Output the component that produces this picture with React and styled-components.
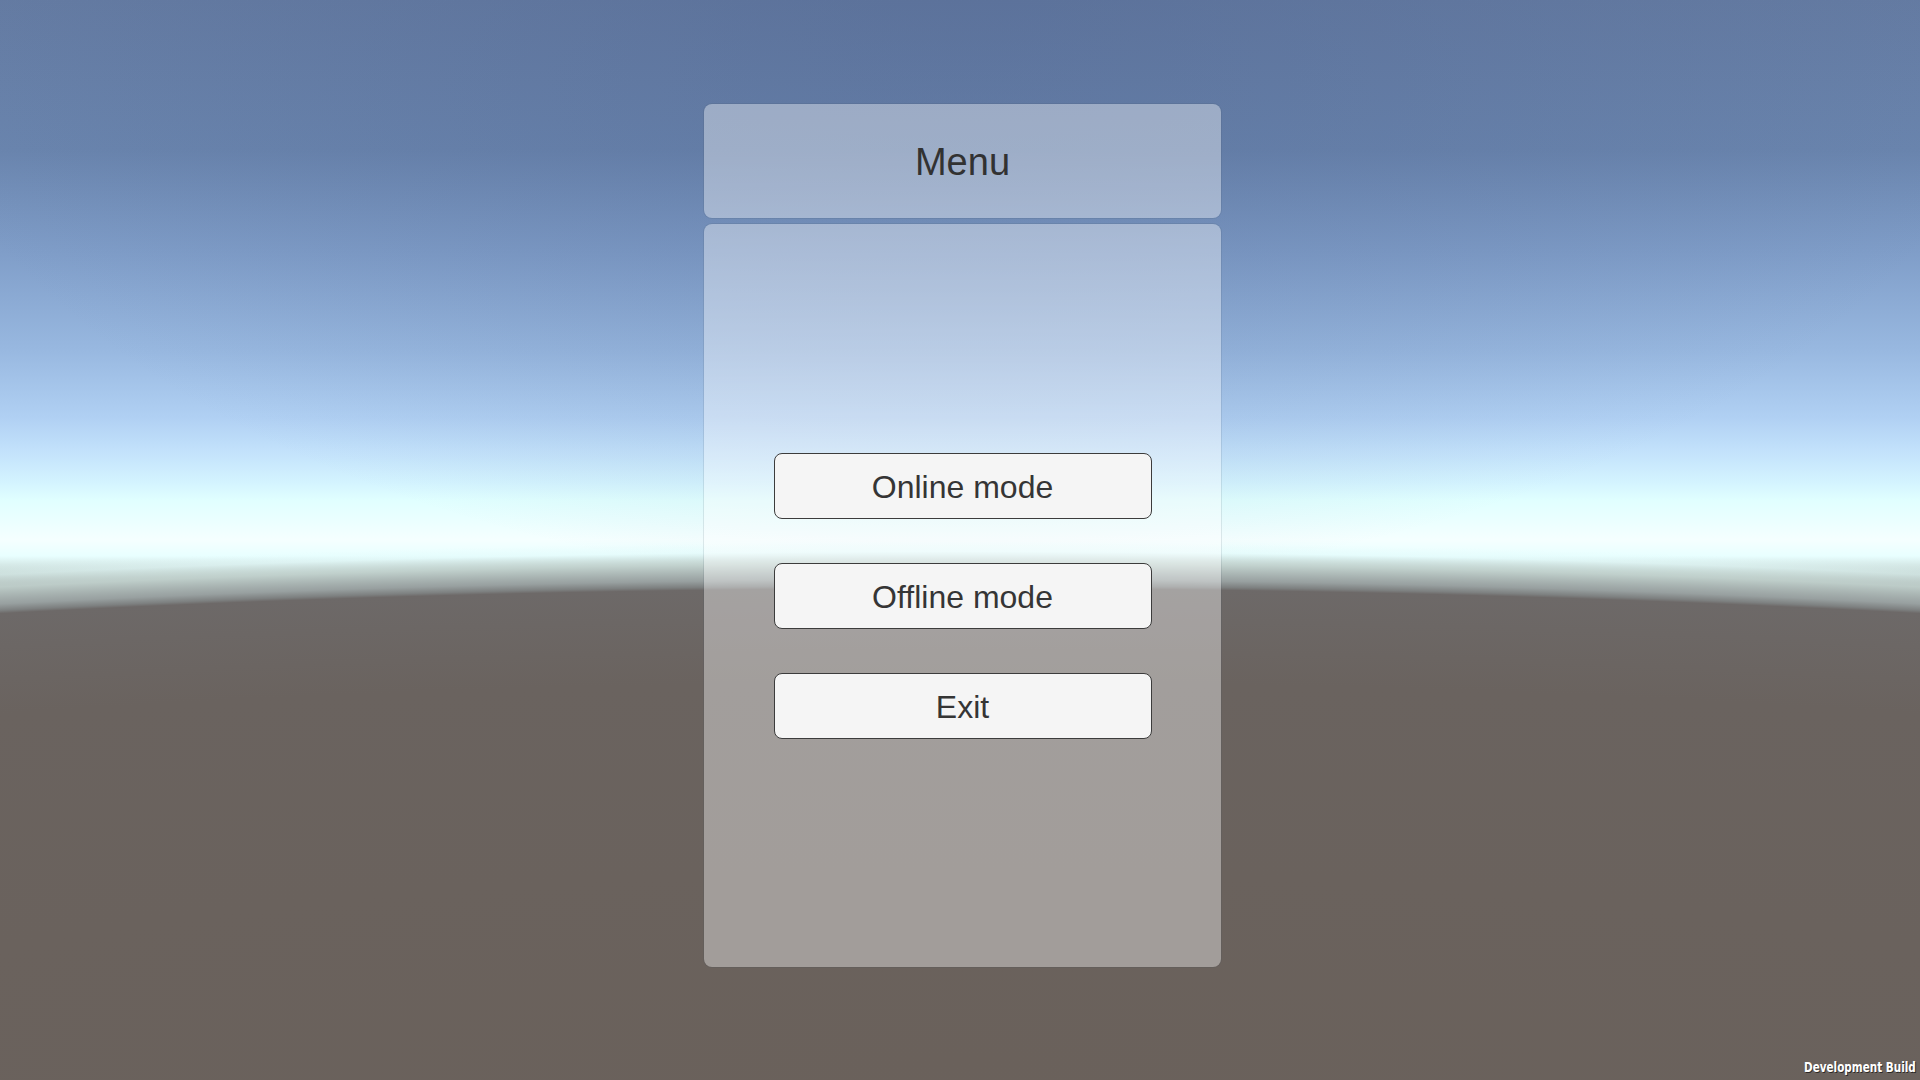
import React from "react";
import styled, { createGlobalStyle } from "styled-components";

const GlobalStyle = createGlobalStyle`
  html, body { margin: 0; padding: 0; height: 100%; overflow: hidden; }
  body { font-family: "Liberation Sans", Arial, sans-serif; }
`;

const Scene = styled.div`
  position: relative;
  width: 100vw;
  height: 100vh;
  box-sizing: border-box;
  padding-top: 104px;
  display: flex;
  justify-content: center;
  align-items: flex-start;
  background:
    radial-gradient(3000px 475px at 50% 1062px,
      #6a615b 0%,
      #6a635f 80%,
      #6d6968 99.7%,
      rgba(125,128,128,1) 100.3%,
      rgba(152,160,160,1) 101.6%,
      rgba(192,208,204,0.9) 105%,
      rgba(225,248,248,0.4) 107.5%,
      rgba(232,255,255,0) 109.5%),
    radial-gradient(ellipse 1100px 650px at 50% -60px, rgba(70,90,135,0.32), rgba(70,90,135,0) 100%),
    linear-gradient(to bottom,
      #657ca3 0px,
      #6a85ae 150px,
      #7f9dc8 250px,
      #98b8e0 350px,
      #b0d0f3 417px,
      #c2e1fb 450px,
      #d4f4ff 483px,
      #e0ffff 500px,
      #f5ffff 540px,
      #e8ffff 556px,
      #c0d0cc 575px,
      #6c6867 600px);
`;

const Column = styled.div`
  width: 517px;
  margin-left: 5px;
  display: flex;
  flex-direction: column;
  gap: 6px;
`;

const Panel = styled.div`
  background: rgba(255, 255, 255, 0.38);
  border-radius: 8px;
  box-shadow: 0 0 0 1px rgba(60, 70, 90, 0.12);
`;

const Header = styled(Panel)`
  height: 114px;
  box-sizing: border-box;
  padding-top: 2px;
  display: flex;
  align-items: center;
  justify-content: center;
`;

const Title = styled.h1`
  margin: 0;
  font-family: "Liberation Sans", Arial, sans-serif;
  font-weight: 400;
  font-size: 38px;
  color: #323232;
  line-height: 1;
`;

const Body = styled(Panel)`
  height: 743px;
  display: flex;
  flex-direction: column;
  align-items: center;
  justify-content: center;
  gap: 44px;
`;

const MenuButton = styled.button`
  width: 378px;
  height: 66px;
  box-sizing: border-box;
  background: #f5f5f5;
  border: 1px solid #3c3c3c;
  border-radius: 8px;
  font-family: "Liberation Sans", Arial, sans-serif;
  font-size: 32px;
  color: #353535;
  padding: 4px 0 0;
  cursor: pointer;
  display: flex;
  align-items: center;
  justify-content: center;
`;

const BuildTag = styled.div`
  position: absolute;
  right: 4px;
  bottom: 6px;
  font-family: "DejaVu Sans Condensed", "Liberation Sans", sans-serif;
  font-weight: 700;
  font-size: 14.5px;
  line-height: 1;
  color: #ffffff;
  text-shadow: 1px 1px 0 rgba(0, 0, 0, 0.6);
  transform: scaleX(0.8);
  transform-origin: right bottom;
  white-space: nowrap;
`;

export default function App() {
  return (
    <>
      <GlobalStyle />
      <Scene>
        <Column>
          <Header>
            <Title>Menu</Title>
          </Header>
          <Body>
            <MenuButton>Online mode</MenuButton>
            <MenuButton>Offline mode</MenuButton>
            <MenuButton>Exit</MenuButton>
          </Body>
        </Column>
        <BuildTag>Development Build</BuildTag>
      </Scene>
    </>
  );
}
